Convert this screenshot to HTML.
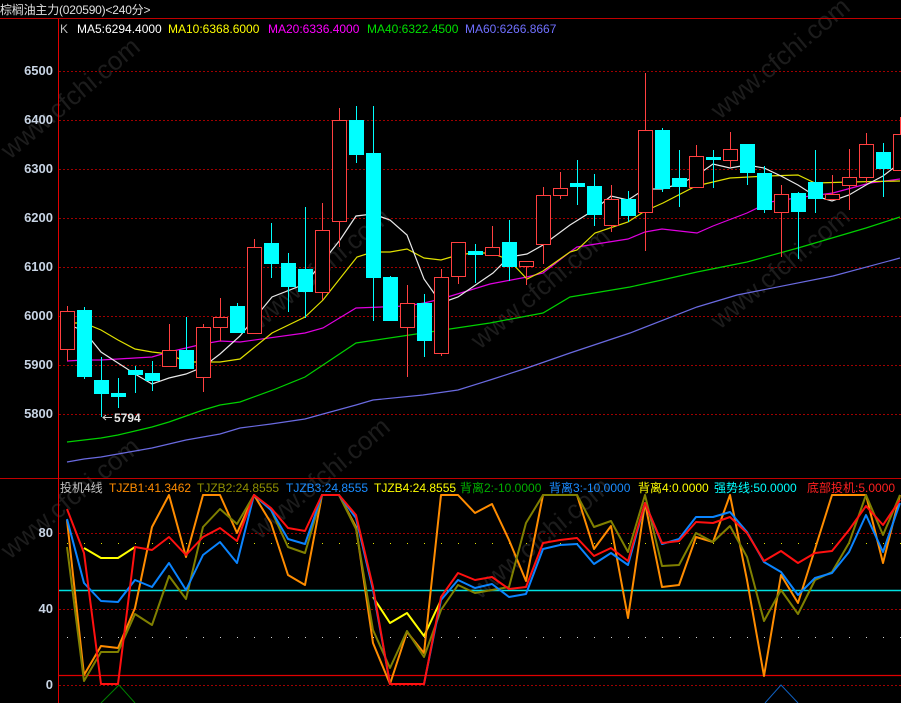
<!DOCTYPE html>
<html><head><meta charset="utf-8"><style>
html,body{margin:0;padding:0;background:#000;}
body{width:901px;height:703px;position:relative;overflow:hidden;font-family:"Liberation Sans","Noto Sans CJK SC",sans-serif;}
.t{position:absolute;white-space:nowrap;font-size:12px;line-height:14px;}
.ax{position:absolute;right:848px;font-size:13px;font-weight:bold;color:#c8d4e4;line-height:14px;}
</style></head><body>
<svg width="901" height="703" style="position:absolute;left:0;top:0">
<g font-family="Liberation Sans" font-size="26" fill="#1c1c1c" opacity="1">
<text transform="translate(10,160) rotate(-40)">www.cfchi.com</text>
<text transform="translate(260,330) rotate(-40)">www.cfchi.com</text>
<text transform="translate(480,350) rotate(-40)">www.cfchi.com</text>
<text transform="translate(720,330) rotate(-40)">www.cfchi.com</text>
<text transform="translate(10,560) rotate(-40)">www.cfchi.com</text>
<text transform="translate(260,540) rotate(-40)">www.cfchi.com</text>
<text transform="translate(720,120) rotate(-40)">www.cfchi.com</text>
<text transform="translate(480,600) rotate(-40)">www.cfchi.com</text>
</g>
<line x1="0" y1="18.5" x2="901" y2="18.5" stroke="#c00000"/>
<line x1="0" y1="478.5" x2="901" y2="478.5" stroke="#c00000"/>
<line x1="58.5" y1="19" x2="58.5" y2="703" stroke="#e00000"/>
<g stroke="#a00000" stroke-dasharray="2,2">
<line x1="59" y1="71.5" x2="901" y2="71.5"/><line x1="59" y1="120.5" x2="901" y2="120.5"/>
<line x1="59" y1="169.5" x2="901" y2="169.5"/><line x1="59" y1="218.5" x2="901" y2="218.5"/>
<line x1="59" y1="267.5" x2="901" y2="267.5"/><line x1="59" y1="316.5" x2="901" y2="316.5"/>
<line x1="59" y1="365.5" x2="901" y2="365.5"/><line x1="59" y1="414.5" x2="901" y2="414.5"/>
<line x1="59" y1="685.5" x2="901" y2="685.5"/><line x1="59" y1="609.5" x2="901" y2="609.5"/>
<line x1="59" y1="533.5" x2="901" y2="533.5"/>
</g>
<line x1="59" y1="637.5" x2="901" y2="637.5" stroke="#d0d0d0" stroke-dasharray="1,16" stroke-dashoffset="-8"/>
<line x1="59" y1="543.5" x2="901" y2="543.5" stroke="#e0e000" stroke-dasharray="1,16" stroke-dashoffset="-8"/>

<g fill="none" stroke-width="1.2">
<polyline stroke="#6a6ae0" points="67,462 84,459 101,457 118,454 135,451 152,448 169,444 186,440 203,437 220,434 240,428 271,424 305,419 323,414 356,405 373,400 423,395 458,390 490,380 527,368 570,353 630,333 697,307 737,295 833,276 900,258"/>
<polyline stroke="#00d000" points="67,442 84,440 101,438 118,435 135,431 152,427 169,422 186,416 203,410 220,405 240,402 273,390 305,377 323,365 356,343 423,333 490,323 543,313 570,297 630,287 662,280 697,272 747,262 798,248 832,238 866,228 900,217"/>
<polyline stroke="#e000e0" points="67,361 84,360 101,360 118,359 135,358 152,357 169,352 186,348 203,344 220,341 240,342 305,333 323,328 356,308 407,306 424,303 441,299 490,284 527,277 543,273 570,252 577,247 628,239 645,232 662,229 697,233 713,226 747,213 770,202 803,197 833,193 870,183 900,179"/>
<polyline stroke="#e0e000" points="67,323 84,323 101,330 118,340 135,349 152,352 169,354 186,362 203,362 220,362 240,359 272,333 305,317 323,300 357,257 373,252 390,252 407,249 424,258 441,260 458,255 473,253 492,253 509,260 527,279 543,271 570,252 577,250 595,233 628,222 645,211 663,203 696,186 730,178 767,176 798,175 815,183 850,182 900,181"/>
<polyline stroke="#e8e8e8" points="67,324 84,331 101,352 118,363 135,374 152,384 169,378 186,374 203,367 220,354 240,336 272,297 305,284 340,240 356,216 373,214 390,220 407,235 424,279 441,303 458,297 493,273 509,257 527,254 543,245 570,225 594,210 611,196 628,200 645,189 662,189 679,184 696,176 713,164 730,168 747,165 764,168 781,176 798,185 815,196 832,201 849,195 866,185 883,176 900,163"/>
</g>

<g stroke-width="1">
<g stroke="#ff4040" fill="none">
<line x1="67.5" y1="306" x2="67.5" y2="361"/><rect x="60.5" y="311.5" width="14" height="38" fill="#000"/>
<line x1="169.5" y1="324" x2="169.5" y2="366"/><rect x="162.5" y="350.5" width="14" height="16" fill="#000"/>
<line x1="203.5" y1="324" x2="203.5" y2="392"/><rect x="196.5" y="327.5" width="14" height="50" fill="#000"/>
<line x1="220.5" y1="298" x2="220.5" y2="341"/><rect x="213.5" y="317.5" width="14" height="10" fill="#000"/>
<line x1="254.5" y1="239" x2="254.5" y2="333"/><rect x="247.5" y="247.5" width="14" height="86" fill="#000"/>
<line x1="322.5" y1="203" x2="322.5" y2="300"/><rect x="315.5" y="230.5" width="14" height="62" fill="#000"/>
<line x1="339.5" y1="108" x2="339.5" y2="247"/><rect x="332.5" y="120.5" width="14" height="101" fill="#000"/>
<line x1="407.5" y1="285" x2="407.5" y2="377"/><rect x="400.5" y="303.5" width="14" height="24" fill="#000"/>
<line x1="441.5" y1="269" x2="441.5" y2="356"/><rect x="434.5" y="277.5" width="14" height="76" fill="#000"/>
<line x1="458.5" y1="242" x2="458.5" y2="284"/><rect x="451.5" y="242.5" width="14" height="34" fill="#000"/>
<line x1="492.5" y1="226" x2="492.5" y2="255"/><rect x="485.5" y="247.5" width="14" height="8" fill="#000"/>
<line x1="526.5" y1="261" x2="526.5" y2="285"/><rect x="519.5" y="261.5" width="14" height="5" fill="#000"/>
<line x1="543.5" y1="187" x2="543.5" y2="264"/><rect x="536.5" y="195.5" width="14" height="49" fill="#000"/>
<line x1="560.5" y1="172" x2="560.5" y2="199"/><rect x="553.5" y="188.5" width="14" height="7" fill="#000"/>
<line x1="611.5" y1="185" x2="611.5" y2="232"/><rect x="604.5" y="199.5" width="14" height="26" fill="#000"/>
<line x1="645.5" y1="73" x2="645.5" y2="251"/><rect x="638.5" y="130.5" width="14" height="82" fill="#000"/>
<line x1="696.5" y1="145" x2="696.5" y2="187"/><rect x="689.5" y="156.5" width="14" height="31" fill="#000"/>
<line x1="730.5" y1="132" x2="730.5" y2="167"/><rect x="723.5" y="149.5" width="14" height="11" fill="#000"/>
<line x1="781.5" y1="185" x2="781.5" y2="257"/><rect x="774.5" y="194.5" width="14" height="18" fill="#000"/>
<line x1="832.5" y1="175" x2="832.5" y2="199"/><rect x="825.5" y="194.5" width="14" height="5" fill="#000"/>
<line x1="849.5" y1="149" x2="849.5" y2="210"/><rect x="842.5" y="177.5" width="14" height="8" fill="#000"/>
<line x1="866.5" y1="133" x2="866.5" y2="183"/><rect x="859.5" y="144.5" width="14" height="33" fill="#000"/>
<line x1="900.5" y1="117" x2="900.5" y2="170"/><rect x="893.5" y="134.5" width="14" height="36" fill="#000"/>
</g>
<g stroke="#00ffff" fill="#00ffff">
<line x1="84.5" y1="307" x2="84.5" y2="379"/><rect x="77" y="310" width="15" height="67" stroke="none"/>
<line x1="101.5" y1="357" x2="101.5" y2="417"/><rect x="94" y="380" width="15" height="14" stroke="none"/>
<line x1="118.5" y1="378" x2="118.5" y2="408"/><rect x="111" y="393" width="15" height="4" stroke="none"/>
<line x1="135.5" y1="366" x2="135.5" y2="393"/><rect x="128" y="370" width="15" height="5" stroke="none"/>
<line x1="152.5" y1="361" x2="152.5" y2="391"/><rect x="145" y="373" width="15" height="8" stroke="none"/>
<line x1="186.5" y1="317" x2="186.5" y2="369"/><rect x="179" y="350" width="15" height="19" stroke="none"/>
<line x1="237.5" y1="303" x2="237.5" y2="333"/><rect x="230" y="306" width="15" height="27" stroke="none"/>
<line x1="271.5" y1="223" x2="271.5" y2="278"/><rect x="264" y="243" width="15" height="21" stroke="none"/>
<line x1="288.5" y1="253" x2="288.5" y2="312"/><rect x="281" y="263" width="15" height="24" stroke="none"/>
<line x1="305.5" y1="207" x2="305.5" y2="318"/><rect x="298" y="269" width="15" height="23" stroke="none"/>
<line x1="356.5" y1="106" x2="356.5" y2="163"/><rect x="349" y="120" width="15" height="35" stroke="none"/>
<line x1="373.5" y1="106" x2="373.5" y2="321"/><rect x="366" y="153" width="15" height="125" stroke="none"/>
<line x1="390.5" y1="276" x2="390.5" y2="321"/><rect x="383" y="277" width="15" height="44" stroke="none"/>
<line x1="424.5" y1="294" x2="424.5" y2="357"/><rect x="417" y="303" width="15" height="38" stroke="none"/>
<line x1="475.5" y1="244" x2="475.5" y2="283"/><rect x="468" y="251" width="15" height="4" stroke="none"/>
<line x1="509.5" y1="220" x2="509.5" y2="281"/><rect x="502" y="242" width="15" height="25" stroke="none"/>
<line x1="577.5" y1="160" x2="577.5" y2="205"/><rect x="570" y="183" width="15" height="4" stroke="none"/>
<line x1="594.5" y1="174" x2="594.5" y2="226"/><rect x="587" y="186" width="15" height="29" stroke="none"/>
<line x1="628.5" y1="191" x2="628.5" y2="222"/><rect x="621" y="199" width="15" height="17" stroke="none"/>
<line x1="662.5" y1="128" x2="662.5" y2="192"/><rect x="655" y="130" width="15" height="59" stroke="none"/>
<line x1="679.5" y1="150" x2="679.5" y2="207"/><rect x="672" y="178" width="15" height="9" stroke="none"/>
<line x1="713.5" y1="150" x2="713.5" y2="188"/><rect x="706" y="157" width="15" height="3" stroke="none"/>
<line x1="747.5" y1="144" x2="747.5" y2="185"/><rect x="740" y="144" width="15" height="29" stroke="none"/>
<line x1="764.5" y1="166" x2="764.5" y2="213"/><rect x="757" y="173" width="15" height="37" stroke="none"/>
<line x1="798.5" y1="192" x2="798.5" y2="259"/><rect x="791" y="193" width="15" height="19" stroke="none"/>
<line x1="815.5" y1="150" x2="815.5" y2="213"/><rect x="808" y="182" width="15" height="17" stroke="none"/>
<line x1="883.5" y1="143" x2="883.5" y2="197"/><rect x="876" y="152" width="15" height="17" stroke="none"/>
</g>
</g>
<line x1="103" y1="417.5" x2="112" y2="417.5" stroke="#d0d0d0"/>
<polyline points="106,415 103,417.5 106,420" fill="none" stroke="#d0d0d0"/>
<text x="114" y="422" font-family="Liberation Sans" font-size="12" font-weight="bold" fill="#e8e8e8">5794</text>

<line x1="59" y1="590.5" x2="901" y2="590.5" stroke="#00e0e0" stroke-width="1.5"/>
<line x1="59" y1="675.5" x2="901" y2="675.5" stroke="#e00000" stroke-width="1.2"/>
<polyline points="101,703 119,685 135,703" fill="none" stroke="#008000"/>
<polyline points="765,703 781,685 798,703" fill="none" stroke="#1060c0"/>
<g fill="none" stroke-width="2" stroke-linejoin="round">
<polyline stroke="#ffff00" points="84,548 101,558 118,558 135,547"/>
<polyline stroke="#ffff00" points="373,597 390,623 407,613 424,636 441,600"/>
<polyline stroke="#ff8c00" points="67,520 84,675 101,646 118,648 135,608 152,527 169,495 186,557 203,495 220,495 237,533 254,495 271,523 288,575 305,585 322,495 339,495 356,527 373,643 390,684 407,632 424,653 441,495 458,495 475,513 492,504 509,540 526,581 543,495 560,495 577,495 594,549 611,526 628,618 645,503 662,587 679,585 696,537 713,542 730,495 747,580 764,676 781,575 798,603 815,549 832,495 849,495 866,495 883,563 900,495"/>
<polyline stroke="#808000" points="67,547 84,681 101,652 118,652 135,614 152,625 169,576 186,599 203,527 220,509 237,524 254,495 271,510 288,547 305,553 322,495 339,495 356,529 373,630 390,668 407,631 424,657 441,610 458,585 475,593 492,590 509,587 526,523 543,495 560,495 577,495 594,527 611,521 628,552 645,495 662,566 679,565 696,533 713,542 730,526 747,557 764,621 781,590 798,614 815,580 832,572 849,543 866,495 883,535 900,495"/>
<polyline stroke="#0a84ff" points="67,519 84,583 101,601 118,602 135,580 152,587 169,563 186,590 203,555 220,542 237,563 254,495 271,510 288,539 305,544 322,495 339,495 356,518 373,590 390,684 407,684 424,684 441,600 458,580 475,588 492,584 509,597 526,594 543,549 560,545 577,544 594,564 611,553 628,565 645,503 662,544 679,539 696,517 713,517 730,512 747,532 764,562 781,572 798,595 815,578 832,573 849,552 866,515 883,552 900,503"/>
<polyline stroke="#ff1010" points="67,509 84,553 101,684 118,684 135,547 152,550 169,537 186,555 203,537 220,528 237,541 254,495 271,508 288,528 305,531 322,495 339,495 356,515 373,587 390,684 407,684 424,684 441,597 458,573 475,580 492,577 509,589 526,587 543,543 560,540 577,538 594,556 611,548 628,561 645,503 662,543 679,541 696,522 713,523 730,517 747,533 764,561 781,551 798,563 815,553 832,551 849,530 866,506 883,525 900,500"/>
</g>
</svg>

<div class="t" style="left:0;top:3px;font-size:12px;letter-spacing:-0.2px;color:#e0e0e0">棕榈油主力(020590)&lt;240分&gt;</div>
<div class="t" style="left:60px;top:22px;color:#c0c0c0">K</div>
<div class="t" style="left:77px;top:22px;color:#ffffff">MA5:6294.4000</div>
<div class="t" style="left:168px;top:22px;color:#ffff00">MA10:6368.6000</div>
<div class="t" style="left:268px;top:22px;color:#ff00ff">MA20:6336.4000</div>
<div class="t" style="left:367px;top:22px;color:#00e000">MA40:6322.4500</div>
<div class="t" style="left:465px;top:22px;color:#7070ff">MA60:6266.8667</div>

<div class="ax" style="top:64px">6500</div>
<div class="ax" style="top:113px">6400</div>
<div class="ax" style="top:162px">6300</div>
<div class="ax" style="top:211px">6200</div>
<div class="ax" style="top:260px">6100</div>
<div class="ax" style="top:309px">6000</div>
<div class="ax" style="top:358px">5900</div>
<div class="ax" style="top:407px">5800</div>
<div class="ax" style="top:526px">80</div>
<div class="ax" style="top:602px">40</div>
<div class="ax" style="top:678px">0</div>

<div class="t" style="left:60px;top:481px;color:#c0c0c0">投机4线</div>
<div class="t" style="left:109px;top:481px;color:#ff8c00">TJZB1:41.3462</div>
<div class="t" style="left:197px;top:481px;color:#909000">TJZB2:24.8555</div>
<div class="t" style="left:286px;top:481px;color:#1a8cff">TJZB3:24.8555</div>
<div class="t" style="left:374px;top:481px;color:#ffff00">TJZB4:24.8555</div>
<div class="t" style="left:460px;top:481px;color:#00b000">背离2:-10.0000</div>
<div class="t" style="left:549px;top:481px;color:#1a8cff">背离3:-10.0000</div>
<div class="t" style="left:638px;top:481px;color:#ffff00">背离4:0.0000</div>
<div class="t" style="left:714px;top:481px;color:#00ffff">强势线:50.0000</div>
<div class="t" style="left:807px;top:481px;color:#ff2020">底部投机:5.0000</div>
</body></html>
